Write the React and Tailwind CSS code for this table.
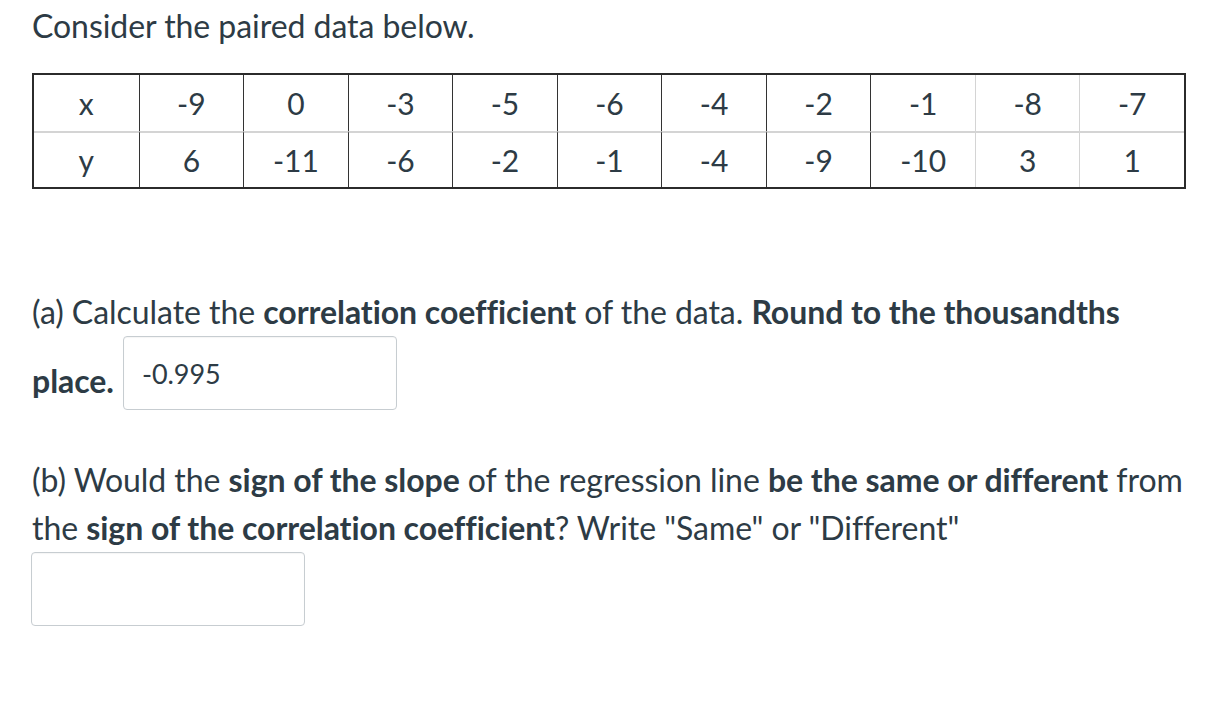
const xs = ['x', '-9', '0', '-3', '-5', '-6', '-4', '-2', '-1', '-8', '-7'];
const ys = ['y', '6', '-11', '-6', '-2', '-1', '-4', '-9', '-10', '3', '1'];

// which inner vertical lines render dark vs light in the original
const lineColor = [
  '',
  'border-[#333333]',
  'border-[#333333]',
  'border-[#333333]',
  'border-[#333333]',
  'border-[#333333]',
  'border-[#333333]',
  'border-[#333333]',
  'border-[#333333]',
  'border-[#d4d4d4]',
  'border-[#d4d4d4]',
];

const Cell = ({ value, i, bottom }) => (
  <div
    className={`h-[56px] flex items-center justify-center ${i > 0 ? 'border-l ' + lineColor[i] : ''} ${
      bottom ? 'border-t-2 border-t-[#d4d4d4]' : ''
    }`}
  >
    {value}
  </div>
);

const AnswerBox = ({ value, className }) => (
  <div
    className={`h-[74px] w-[274px] rounded-[4px] border border-[#c7cdd1] bg-white flex items-center px-[18px] text-[27px] leading-none shadow-[inset_0_1px_1px_rgba(0,0,0,0.04)] ${className || ''}`}
  >
    {value}
  </div>
);

export default function App() {
  return (
    <div
      className="min-h-[726px] w-[1208px] bg-white text-[#2d3b45] text-[32px] leading-[48px] pl-[32px] pr-[6px] pt-[2px] tracking-[-0.05px]"
      style={{ fontFamily: 'Lato, "Open Sans", sans-serif' }}
    >
      <p>Consider the paired data below.</p>

      {/* data table */}
      <div className="mt-[23px] w-[1154px] border-2 border-[#2b2b2b] grid grid-cols-11 text-[30px] leading-none">
        {xs.map((v, i) => (
          <Cell key={'x' + i} value={v} i={i} />
        ))}
        {ys.map((v, i) => (
          <Cell key={'y' + i} value={v} i={i} bottom />
        ))}
      </div>

      {/* part a */}
      <div className="mt-[99px]">
        <p>
          (a) Calculate the <b className="font-bold">correlation coefficient</b> of the data.{' '}
          <b className="font-bold">Round to the thousandths</b>
        </p>
        <div className="flex items-start gap-[9px]">
          <b className="font-bold mt-[21px]">place.</b>
          <AnswerBox value="-0.995" />
        </div>
      </div>

      {/* part b */}
      <div className="mt-[46px]">
        <p>
          (b) Would the <b className="font-bold">sign of the slope</b> of the regression line{' '}
          <b className="font-bold">be the same or different</b> from the{' '}
          <b className="font-bold">sign of the correlation coefficient</b>? Write "Same" or "Different"
        </p>
        <AnswerBox className="-ml-px" />
      </div>
    </div>
  );
}
